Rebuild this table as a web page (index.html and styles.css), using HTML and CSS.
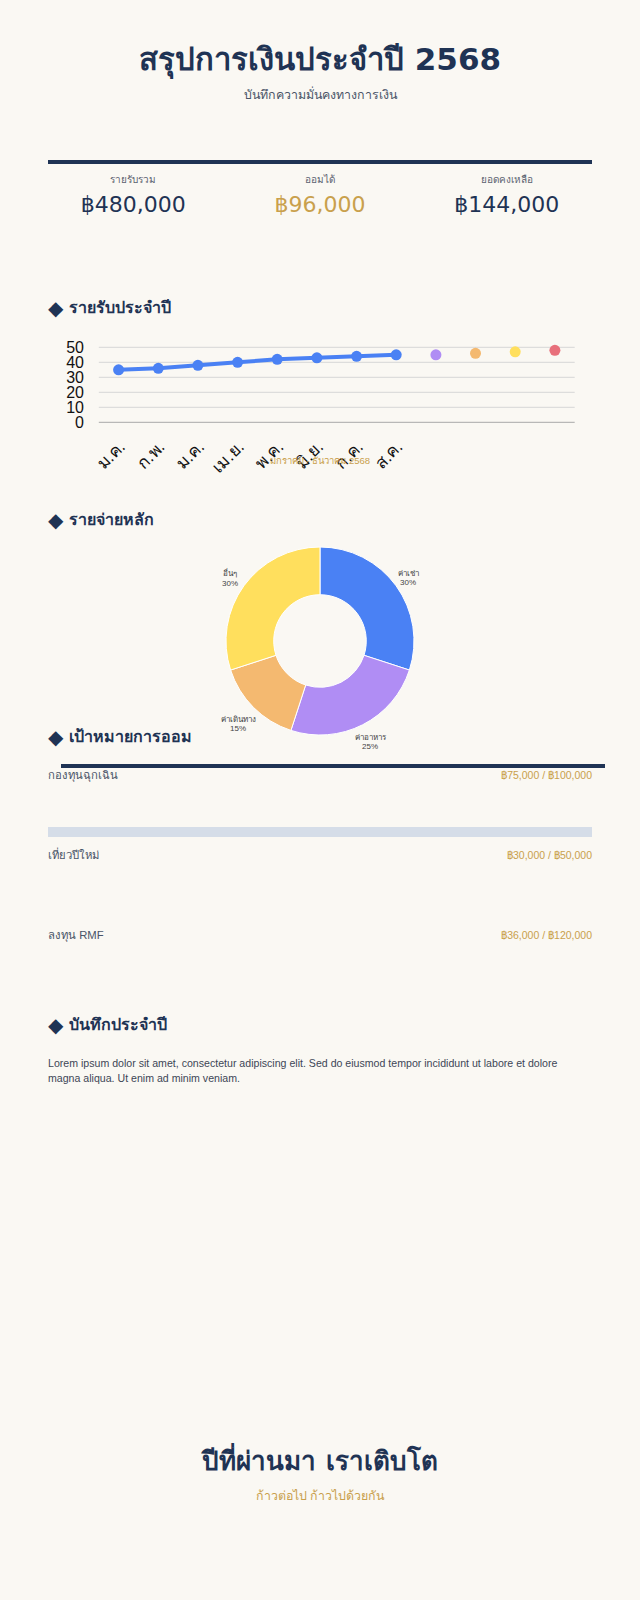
FILE: index.html
```html
<!DOCTYPE html>
<html lang="th">
<head>
<meta charset="utf-8">
<title>สรุปการเงินประจำปี 2568</title>
<link rel="stylesheet" href="styles.css">
</head>
<body>
<div class="page">
  <header class="hero">
    <h1 class="hero-title">สรุปการเงินประจำปี 2568</h1>
    <p class="hero-sub">บันทึกความมั่นคงทางการเงิน</p>
  </header>

  <section class="stats">
    <div class="stat">
      <div class="stat-label">รายรับรวม</div>
      <div class="stat-value">฿480,000</div>
    </div>
    <div class="stat">
      <div class="stat-label">ออมได้</div>
      <div class="stat-value gold">฿96,000</div>
    </div>
    <div class="stat">
      <div class="stat-label">ยอดคงเหลือ</div>
      <div class="stat-value">฿144,000</div>
    </div>
  </section>

  <section class="income">
    <h2 class="sec-title"><span class="dia">◆</span> รายรับประจำปี</h2>
    <div class="line-wrap">
      <svg class="line-chart" width="544" height="132" viewBox="48 322 544 132">
        <g class="grid">
          <line x1="98.8" x2="574.7" y1="347.3" y2="347.3"/>
          <line x1="98.8" x2="574.7" y1="362.3" y2="362.3"/>
          <line x1="98.8" x2="574.7" y1="377.3" y2="377.3"/>
          <line x1="98.8" x2="574.7" y1="392.3" y2="392.3"/>
          <line x1="98.8" x2="574.7" y1="407.3" y2="407.3"/>
        </g>
        <line class="axis" x1="98.8" x2="574.7" y1="422.3" y2="422.3"/>
        <g class="ylab">
          <text x="84" y="353">50</text>
          <text x="84" y="368">40</text>
          <text x="84" y="383">30</text>
          <text x="84" y="398">20</text>
          <text x="84" y="413">10</text>
          <text x="84" y="428">0</text>
        </g>
        <polyline class="trend" points="118.6,369.8 158.3,368.3 197.9,365.3 237.6,362.3 277.2,359.3 316.9,357.8 356.6,356.3 396.2,354.8"/>
        <g class="pts">
          <circle cx="118.6" cy="369.8" r="5.5"/>
          <circle cx="158.3" cy="368.3" r="5.5"/>
          <circle cx="197.9" cy="365.3" r="5.5"/>
          <circle cx="237.6" cy="362.3" r="5.5"/>
          <circle cx="277.2" cy="359.3" r="5.5"/>
          <circle cx="316.9" cy="357.8" r="5.5"/>
          <circle cx="356.6" cy="356.3" r="5.5"/>
          <circle cx="396.2" cy="354.8" r="5.5"/>
        </g>
        <circle class="p-purple" cx="435.9" cy="354.8" r="5.5"/>
        <circle class="p-orange" cx="475.5" cy="353.3" r="5.5"/>
        <circle class="p-yellow" cx="515.2" cy="351.8" r="5.5"/>
        <circle class="p-red" cx="554.9" cy="350.3" r="5.5"/>
        <g class="xlab">
          <text transform="translate(126 448) rotate(-45)">ม.ค.</text>
          <text transform="translate(165.7 448) rotate(-45)">ก.พ.</text>
          <text transform="translate(205.3 448) rotate(-45)">ม.ค.</text>
          <text transform="translate(245 448) rotate(-45)">เม.ย.</text>
          <text transform="translate(284.6 448) rotate(-45)">พ.ค.</text>
          <text transform="translate(324.3 448) rotate(-45)">มิ.ย.</text>
          <text transform="translate(364 448) rotate(-45)">ก.ค.</text>
          <text transform="translate(403.6 448) rotate(-45)">ส.ค.</text>
        </g>
      </svg>
    </div>
    <div class="chart-caption">มกราคม - ธันวาคม 2568</div>
  </section>

  <section class="expense">
    <h2 class="sec-title"><span class="dia">◆</span> รายจ่ายหลัก</h2>
    <div class="donut-wrap">
      <svg class="donut" width="544" height="189" viewBox="48 534 544 189">
        <path class="seg-blue" d="M320 547 A94 94 0 0 1 409.4 670.05 L364.03 655.31 A46.3 46.3 0 0 0 320 594.7 Z"/>
        <path class="seg-purple" d="M409.4 670.05 A94 94 0 0 1 290.95 730.4 L305.69 685.03 A46.3 46.3 0 0 0 364.03 655.31 Z"/>
        <path class="seg-orange" d="M290.95 730.4 A94 94 0 0 1 230.6 670.05 L275.97 655.31 A46.3 46.3 0 0 0 305.69 685.03 Z"/>
        <path class="seg-yellow" d="M230.6 670.05 A94 94 0 0 1 320 547 L320 594.7 A46.3 46.3 0 0 0 275.97 655.31 Z"/>
        <g class="dlab">
          <text x="408" y="575.5">ค่าเช่า</text>
          <text x="408" y="584.5">30%</text>
          <text x="230" y="575.5">อื่นๆ</text>
          <text x="230" y="586">30%</text>
          <text x="238" y="722">ค่าเดินทาง</text>
          <text x="238" y="730.5">15%</text>
          <text x="370" y="739.5">ค่าอาหาร</text>
          <text x="370" y="748.5">25%</text>
        </g>
      </svg>
    </div>
  </section>

  <section class="goals">
    <h2 class="sec-title"><span class="dia">◆</span> เป้าหมายการออม</h2>
    <div class="goal-accent"></div>
    <div class="goal">
      <div class="goal-row"><span class="goal-name">กองทุนฉุกเฉิน</span><span class="goal-amt">฿75,000 / ฿100,000</span></div>
      <div class="goal-track"></div>
    </div>
    <div class="goal">
      <div class="goal-row"><span class="goal-name">เที่ยวปีใหม่</span><span class="goal-amt">฿30,000 / ฿50,000</span></div>
      <div class="goal-track hidden"></div>
    </div>
    <div class="goal">
      <div class="goal-row"><span class="goal-name">ลงทุน RMF</span><span class="goal-amt">฿36,000 / ฿120,000</span></div>
      <div class="goal-track hidden"></div>
    </div>
  </section>

  <section class="notes">
    <h2 class="sec-title"><span class="dia">◆</span> บันทึกประจำปี</h2>
    <p class="notes-text">Lorem ipsum dolor sit amet, consectetur adipiscing elit. Sed do eiusmod tempor incididunt ut labore et dolore magna aliqua. Ut enim ad minim veniam.</p>
  </section>

  <footer class="closing">
    <h2 class="closing-title">ปีที่ผ่านมา เราเติบโต</h2>
    <p class="closing-sub">ก้าวต่อไป ก้าวไปด้วยกัน</p>
  </footer>
</div>
</body>
</html>
```

FILE: styles.css
```css
html {
  background: #faf8f3;
}
body {
  margin: 0;
  background: #faf8f3;
  color: #1f3354;
  font-family: "Liberation Sans", Arial, sans-serif;
}
.page {
  padding: 0 48px;
  min-height: 1600px;
  box-sizing: border-box;
}

/* hero */
.hero {
  padding-top: 39px;
  text-align: center;
}
.hero-title {
  margin: 0;
  font-family: "DejaVu Sans", sans-serif;
  font-size: 31px;
  line-height: 40px;
  font-weight: 700;
  color: #1f3354;
}
.hero-sub {
  margin: 6px 0 0;
  font-size: 12.4px;
  line-height: 20px;
  color: #4a5568;
}

/* stats */
.stats {
  margin-top: 55px;
  border-top: 4px solid #1f3354;
  padding-top: 8px;
  display: grid;
  grid-template-columns: 1fr 1fr 1fr;
  gap: 16px;
  text-align: center;
}
.stat-label {
  font-size: 10px;
  line-height: 16px;
  color: #5a6270;
}
.stat-value {
  margin-top: 3px;
  font-family: "DejaVu Sans", sans-serif;
  font-size: 22px;
  line-height: 28px;
  color: #1f3354;
}
.stat-value.gold {
  color: #c9a04c;
}

/* section titles */
.sec-title {
  margin: 0;
  font-family: "DejaVu Sans", sans-serif;
  font-size: 16px;
  line-height: 28px;
  font-weight: 700;
  color: #1f3354;
}
.dia {
  font-size: 20px;
  font-weight: 400;
  line-height: 28px;
  vertical-align: top;
}

/* income chart */
.income {
  margin-top: 75px;
}
.line-wrap {
  height: 132px;
}
.line-chart {
  display: block;
  overflow: visible;
}
.grid line {
  stroke: #d6d6d6;
  stroke-width: 1;
}
.axis {
  stroke: #a8a8a8;
  stroke-width: 1;
}
.ylab text {
  font-family: "Liberation Sans", Arial, sans-serif;
  font-size: 16px;
  fill: #111;
  text-anchor: end;
}
.trend {
  fill: none;
  stroke: #4a81f4;
  stroke-width: 4;
  stroke-linejoin: round;
  stroke-linecap: round;
}
.pts circle {
  fill: #4a81f4;
}
.p-purple { fill: #b08df4; }
.p-orange { fill: #f4b970; }
.p-yellow { fill: #ffdf5d; }
.p-red { fill: #e8707b; }
.xlab text {
  font-family: "Liberation Sans", Arial, sans-serif;
  font-size: 17px;
  fill: #111;
  text-anchor: end;
}
.chart-caption {
  font-size: 9.5px;
  line-height: 14px;
  text-align: center;
  color: #c9a04c;
}

/* expense donut */
.expense {
  margin-top: 38px;
}
.donut-wrap {
  height: 189px;
}
.donut {
  display: block;
  overflow: visible;
}
.donut path {
  stroke: #ffffff;
  stroke-width: 1;
}
.seg-blue { fill: #4a81f4; }
.seg-purple { fill: #b08df4; }
.seg-orange { fill: #f4b970; }
.seg-yellow { fill: #ffdf5d; }
.dlab text {
  font-family: "Liberation Sans", Arial, sans-serif;
  font-size: 8px;
  fill: #444;
  text-anchor: middle;
}

/* goals */
.goal-accent {
  margin: 13px -13px 0 13px;
  height: 4px;
  background: #1f3354;
}
.goal {
  padding-bottom: 11px;
}
.goal-row {
  display: flex;
  justify-content: space-between;
  align-items: center;
  height: 14px;
}
.goal-name {
  font-size: 11.3px;
  color: #4a5568;
}
.goal-amt {
  font-size: 10.5px;
  color: #c9a04c;
}
.goal-track {
  margin-top: 45px;
  height: 10px;
  background: #d5dde8;
}
.goal-track.hidden {
  background: transparent;
}

/* notes */
.notes {
  margin-top: 3px;
}
.notes-text {
  margin: 17px 0 0;
  max-width: 540px;
  font-size: 10.6px;
  line-height: 15px;
  color: #3d4656;
}

/* closing */
.closing {
  margin-top: 355px;
  text-align: center;
}
.closing-title {
  margin: 0;
  font-family: "DejaVu Sans", sans-serif;
  font-size: 26px;
  line-height: 40px;
  font-weight: 700;
  color: #1f3354;
}
.closing-sub {
  margin: 5px 0 0;
  font-size: 12.4px;
  line-height: 20px;
  color: #c9a04c;
}
```
